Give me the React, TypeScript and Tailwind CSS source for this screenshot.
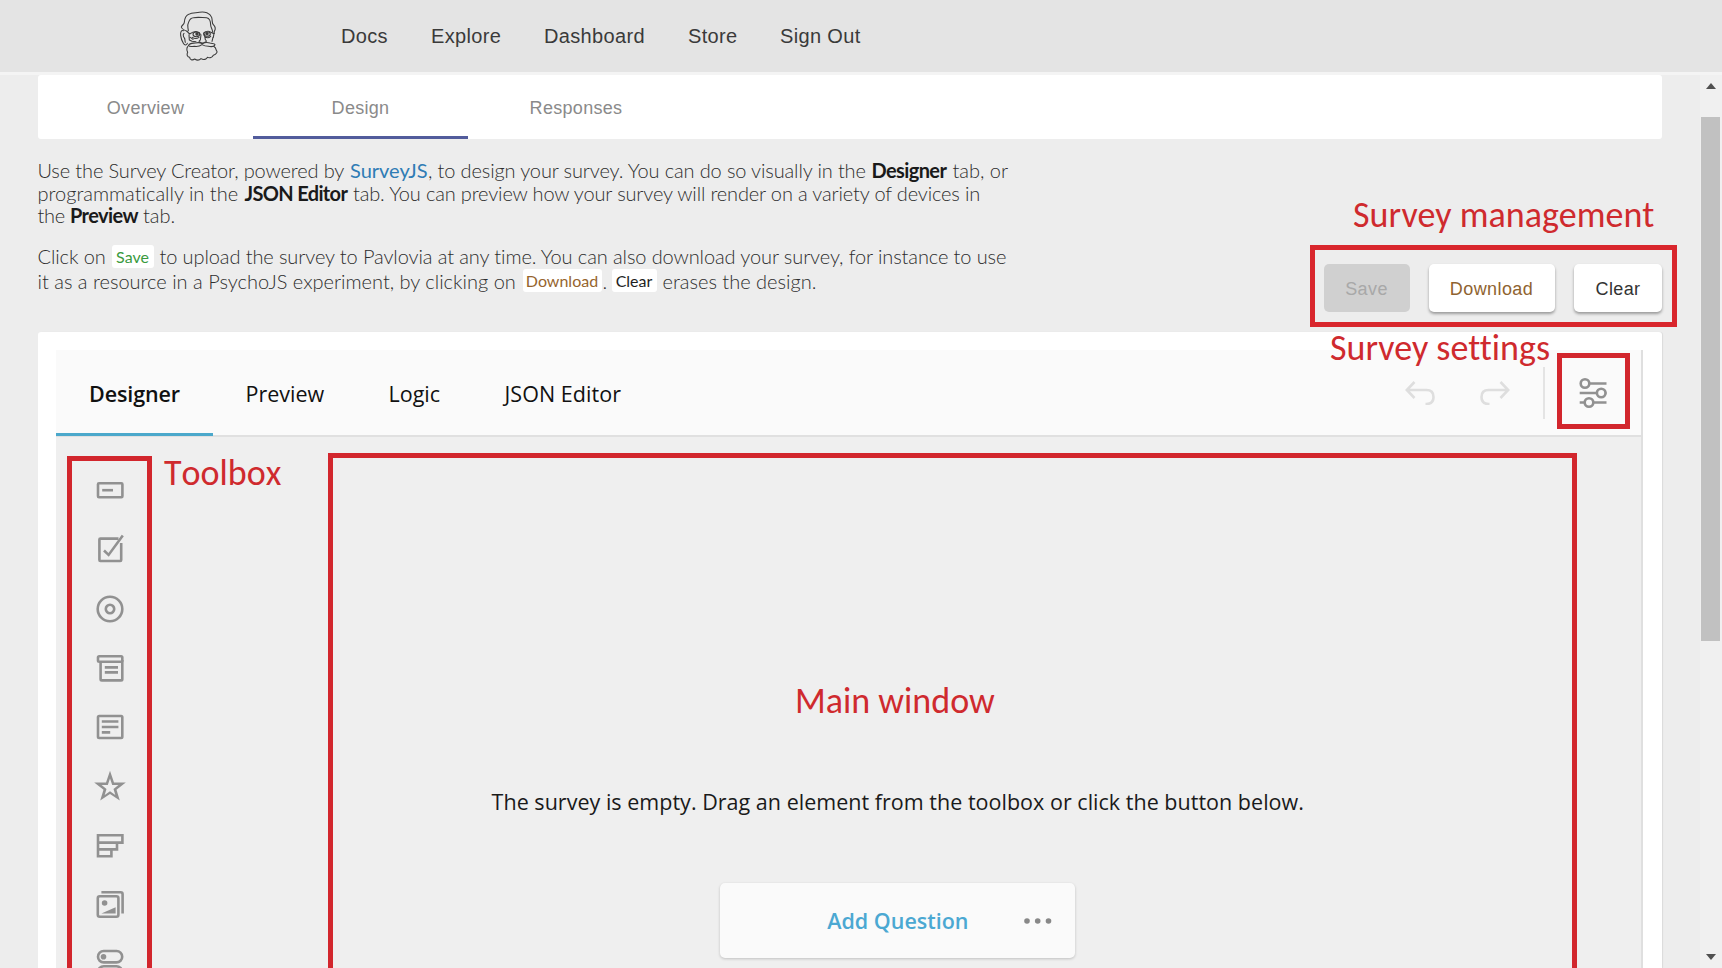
import type { ReactNode } from "react";

const navLinks = [
  { label: "Docs", cls: "w-[90px]" },
  { label: "Explore", cls: "w-[113px]" },
  { label: "Dashboard", cls: "w-[144px]" },
  { label: "Store", cls: "w-[92px]" },
  { label: "Sign Out", cls: "w-[90px]" },
];

function Logo() {
  return (
    <svg className="h-[52px] w-[42px]" viewBox="55 30 126 156" fill="none" stroke="#3c3c3c" strokeWidth="3.2" strokeLinejoin="round" strokeLinecap="round">
      <path d="M82 94c-7-3-16-8-17-13 1-5 9-8 9-14 1-12 3-20 13-24 10-6 22-4 32-6 16-3 32 2 37 15 3 10 0 18 5 22 7 7 7 14 3 20l-3 18" />
      <path d="M86 92c0-8-5-14 0-23 3-8 4-15 15-16 16-2 27 0 40 0 10 2 12 12 12 22 0 8 6 12 6 22" />
      <path d="M72 92c-8-2-10 5-9 14 1 9 4 17 8 24 4 7 10 6 12 0M73 100c-4 3-2 10 1 14 3 3 1 9 3 13" />
      <path d="M82 94l8 8c8-6 14-10 22-7 6 1 9 3 10 8M132 100c5-6 14-8 20-4 6 3 8 6 12 4" />
      <ellipse cx="110" cy="103" rx="10" ry="7" />
      <ellipse cx="142" cy="102" rx="10" ry="7" />
      <circle cx="112" cy="102" r="3.5" fill="#3c3c3c" />
      <circle cx="142" cy="101" r="3.5" fill="#3c3c3c" />
      <path d="M124 104l-2 16c-5 3-5 8 1 7 4 3 8 3 12 0 5 0 7-4 2-8l-3-16M88 104l1 16 8 4 12 1M160 112l-3 12M98 112c6 4 14 4 20 0M136 111c6 3 12 3 17-2M92 112l8 6" />
      <path d="M86 137c4-9 14-7 21-8 8-2 14-2 20 2 8-4 18-4 24-2 7 2 14 1 15 5-2 7-14 6-20 5-8 0-14-2-19-5-8 6-16 6-23 5-8 0-14 2-18-2Z" />
      <path d="M84 140c-5 7-2 12 0 17-4 8 0 14 6 15 0 7 8 10 15 5 6 4 14 4 19-1 8 5 17 2 19-4 7 3 15 0 18-6 9-3 14-10 9-15-1-6-4-10-8-12" />
    </svg>
  );
}

function Bold({ children, cls }: { children: ReactNode; cls: string }) {
  return <b className={"font-bold text-[#1a1a1a] " + cls}>{children}</b>;
}

function Chip({ children, cls }: { children: ReactNode; cls: string }) {
  return (
    <span className={"flex h-[23px] items-center justify-center rounded-[3px] bg-white text-[16px] font-normal " + cls}>
      {children}
    </span>
  );
}

function Icon({ children }: { children: ReactNode }) {
  return (
    <svg className="size-8 overflow-visible" viewBox="-16 -16 32 32" fill="none" stroke="#919191" strokeWidth="2.6">
      {children}
    </svg>
  );
}

const tools: ReactNode[] = [
  <>
    <rect x="-12" y="-6.7" width="24.4" height="14" rx="1" />
    <path d="M-7.8 .2H3" />
  </>,
  <>
    <path d="M8.5-10.4H-9.6q-1 0-1 1V11q0 1 1 1H10.2q1 0 1-1V-6" />
    <path d="M-6 1.5l4.6 4.4L12.8-13.6" />
  </>,
  <>
    <circle r="12.3" />
    <circle r="4.2" />
  </>,
  <>
    <rect x="-12" y="-11.7" width="24.3" height="5.4" rx="1.2" />
    <path d="M-9.4-6.3V11.2q0 1.2 1.2 1.2H11.1q1.2 0 1.2-1.2V-8M-5.2-.6H8M-5.2 4.4H8" />
  </>,
  <>
    <rect x="-12" y="-11" width="24.3" height="22" rx="1.2" />
    <path d="M-8.2-5.5H8.4M-8.2 0H8.4M-8.2 5.4H.2" />
  </>,
  <path
    d="M0-16.3L4-4.6 15.8-4.4 6.5 2.8 9.8 13.6 0 7 -9.8 13.6 -6.5 2.8 -15.8-4.4 -4-4.6ZM0-8.6L-2.2-2.1 -8.4-2 -3.5 1.9 -5.3 8 0 4.3 5.3 8 3.5 1.9 8.4-2 2.2-2.1Z"
    fill="#919191"
    fillRule="evenodd"
    stroke="none"
  />,
  <path d="M-12-10.7H12.4V-3.4H-12ZM-12-3.4V10.3H1.4V3.4M-12 3.4H7V-3.4" />,
  <>
    <rect x="-12.2" y="-8.8" width="20.6" height="20.6" rx="2" />
    <path d="M-8.6-12.8H10.6q2 0 2 2V8.4" />
    <circle cx="-5.4" cy="-2" r="2.8" fill="#919191" stroke="none" />
    <path d="M-8.6 8.6L5.6 2.2V8.6Z" fill="#919191" stroke="none" />
  </>,
  <>
    <rect x="-12" y="-14" width="24.2" height="11.4" rx="5.7" />
    <circle cx="-6.5" cy="-8.3" r="2.8" fill="#919191" stroke="none" />
    <rect x="-12" y="1.3" width="24.2" height="11.4" rx="5.7" />
  </>,
];

function Note({ children, cls }: { children: ReactNode; cls: string }) {
  return (
    <span className={"absolute whitespace-nowrap font-['Carlito','Calibri','Lato',sans-serif] text-[36px] leading-[44px] text-[#cf2a2e] [font-variant-ligatures:none] " + cls}>
      {children}
    </span>
  );
}

export default function App() {
  return (
    <div className="relative flex h-[968px] w-[1722px] flex-col overflow-hidden bg-[#ededed] font-['Liberation_Sans',Arial,sans-serif]">
      <header className="flex h-[75px] shrink-0 items-center border-b-[3px] border-[#f4f4f4] bg-[#e4e4e4]">
        <div className="w-[341px] shrink-0 pl-[178px]">
          <Logo />
        </div>
        <nav className="flex text-[20px] tracking-[0.35px] text-[#3a3a3a]">
          {navLinks.map((l) => (
            <a key={l.label} className={"whitespace-nowrap " + l.cls}>{l.label}</a>
          ))}
        </nav>
      </header>

      <div className="flex min-h-0 flex-1">
        <main className="flex w-[1700px] flex-col pl-[37.5px]">
          <div className="flex h-16 w-[1624px] shrink-0 rounded-[3px] bg-white text-[18px] text-[#8a8a8a]">
            <div className="flex w-[215px] items-center justify-center border-b-[3px] border-transparent pt-[5px] pl-px tracking-[0.3px]">Overview</div>
            <div className="flex w-[215px] items-center justify-center border-b-[3px] border-[#525c9c] pt-[5px] pl-px tracking-[0.3px]">Design</div>
            <div className="flex w-[215px] items-center justify-center border-b-[3px] border-transparent pt-[5px] pl-0.5 tracking-[0.3px]">Responses</div>
          </div>

          <div className="flex h-[193px] w-[1624px] shrink-0 justify-between">
            <div className="flex flex-col whitespace-pre pt-[20.2px] font-['Lato',sans-serif] text-[20px] font-light text-[#2e2e2e] [font-variant-ligatures:none]">
              <div className="flex h-[22.6px] leading-[22.4px]">
                <span className="w-[312.5px] tracking-[-0.14px]">Use the Survey Creator, powered by</span>
                <span className="w-[78px] font-normal text-[#2f7cb5]">SurveyJS</span>
                <span className="w-[443.5px] tracking-[-0.13px]">, to design your survey. You can do so visually in the</span>
                <Bold cls="w-[75px] tracking-[-0.6px]">Designer</Bold>
                <span className="pl-[6px]">tab, or</span>
              </div>
              <div className="flex h-[22.4px] leading-[22.4px]">
                <span className="w-[207px]">programmatically in the</span>
                <Bold cls="w-[108.5px] tracking-[-0.65px]">JSON Editor</Bold>
                <span className="tracking-[-0.15px]">tab. You can preview how your survey will render on a variety of devices in</span>
              </div>
              <div className="flex h-[22.4px] leading-[22.4px]">
                <span className="w-[32.5px] tracking-[-0.3px]">the</span>
                <Bold cls="w-[73px] tracking-[-0.6px]">Preview</Bold>
                <span>tab.</span>
              </div>
              <div className="mt-[17.8px] flex h-[24.5px] leading-6">
                <span className="w-[74px] tracking-[-0.1px]">Click on</span>
                <Chip cls="mt-px mr-[6px] w-[42px] text-[#3a9a3e]">Save</Chip>
                <span className="tracking-[-0.1px]">to upload the survey to Pavlovia at any time. You can also download your survey, for instance to use</span>
              </div>
              <div className="flex h-6 leading-6">
                <span className="w-[485px]">it as a resource in a PsychoJS experiment, by clicking on</span>
                <Chip cls="mt-[0.5px] w-[79px] text-[#96642e]">Download</Chip>
                <span className="w-[10px] pl-px">.</span>
                <Chip cls="mt-[0.5px] mr-[6px] w-[45px] text-[#1e1e1e]">Clear</Chip>
                <span>erases the design.</span>
              </div>
            </div>
            <div className="flex gap-[19px] pt-[125px] text-[18px] tracking-[0.4px]">
              <button className="h-12 w-[86px] rounded-[5px] bg-[#d0d0d0] pt-0.5 text-[#a8a8a8]">Save</button>
              <button className="h-12 w-[126px] rounded-[5px] bg-white pt-0.5 text-[#8f6330] shadow-[0_2px_3px_rgba(0,0,0,0.35)]">Download</button>
              <button className="h-12 w-[88px] rounded-[5px] bg-white pt-0.5 pl-px text-[#333] shadow-[0_2px_3px_rgba(0,0,0,0.35)]">Clear</button>
            </div>
          </div>

          <section className="flex w-[1624px] flex-1 flex-col rounded-t-[3px] bg-white pt-[18px] pr-[19px] pl-[18.5px] font-['Open_Sans',sans-serif] shadow-[1px_0_1px_rgba(0,0,0,0.08)]">
            <div className="flex flex-1 flex-col border-r-2 border-[#dfdfdf] bg-[#efefef]">
              <div className="flex h-[86.5px] shrink-0 border-b-2 border-[#e0e0e0] bg-[#fafafa] text-[21.5px] whitespace-nowrap text-[#111]">
                <div className="flex h-[86px] w-[157px] items-center border-b-[3px] border-[#4ba8cb] pt-[5px] pl-[33px] font-semibold tracking-[-0.1px]">Designer</div>
                <div className="flex w-[143px] items-center pt-[3px] pl-[32.5px]">Preview</div>
                <div className="flex w-[114px] items-center pt-[3px] pl-[32.5px]">Logic</div>
                <div className="flex w-[160px] items-center pt-[3px] pl-[34.5px] tracking-[0.05px]">JSON Editor</div>
                <div className="ml-auto flex items-center pt-[2px] pr-[31.5px]">
                  <svg className="h-6 w-[30px]" viewBox="0 0 30 24" fill="none" stroke="#dedede" strokeWidth="2.6">
                    <path d="M9.5 1L1.8 9l7.7 8M2 9h19.5q7 0 7 7t-7 7h-1" />
                  </svg>
                  <svg className="ml-[45px] h-6 w-[30px] -scale-x-100" viewBox="0 0 30 24" fill="none" stroke="#dedede" strokeWidth="2.6">
                    <path d="M9.5 1L1.8 9l7.7 8M2 9h19.5q7 0 7 7t-7 7h-1" />
                  </svg>
                  <div className="ml-[33px] h-[52px] w-[2px] bg-[#e4e4e4]" />
                  <div className="ml-[32.5px]">
                    <Icon>
                      <circle cx="-8" cy="-9.5" r="4.3" />
                      <circle cx="8.2" cy="0" r="4.3" />
                      <circle cx="-4" cy="9.5" r="4.3" />
                      <path d="M-3.7-9.5H13.5M-13.3 0H4M12.5 0h1M-13.3 9.5H-8.3M.3 9.5H13.5" />
                    </Icon>
                  </div>
                </div>
              </div>
              <div className="flex min-h-0 flex-1">
                <div className="flex h-[531px] w-[108.5px] flex-col overflow-hidden pt-[24px]">
                  {tools.map((t, i) => (
                    <div key={i} className="flex h-[59.3px] shrink-0 items-center justify-center">
                      <Icon>{t}</Icon>
                    </div>
                  ))}
                </div>
                <div className="flex flex-1 flex-col items-center pt-[350.5px] pr-[41px] pl-[31.5px] text-[21.5px] text-[#1a1a1a]">
                  <p className="h-[30px] whitespace-nowrap leading-[30px] tracking-[0.02px]">The survey is empty. Drag an element from the toolbox or click the button below.</p>
                  <div className="mt-[66px] flex h-[75px] w-[355px] shrink-0 items-center rounded-[5px] bg-[#fafafa] shadow-[0_1px_3px_rgba(0,0,0,0.2)]">
                    <span className="w-[303px] pt-px pl-[107px] font-semibold whitespace-nowrap text-[#4ba8d2]">Add Question</span>
                    <svg className="h-2 w-8" viewBox="0 0 32 8" fill="#888">
                      <circle cx="4" cy="4" r="2.8" />
                      <circle cx="14.7" cy="4" r="2.8" />
                      <circle cx="25.5" cy="4" r="2.8" />
                    </svg>
                  </div>
                </div>
              </div>
            </div>
          </section>
        </main>

        <aside className="flex w-[22px] flex-col items-center bg-[#f0f0f0] pr-px">
          <svg className="mt-[7.5px] h-[6px] w-[10px]" viewBox="0 0 10 6"><path d="M5 0l5 6H0z" fill="#505050" /></svg>
          <div className="mt-[28px] h-[524px] w-[19px] bg-[#c1c1c1]" />
          <svg className="mt-[313px] h-[6px] w-[10px]" viewBox="0 0 10 6"><path d="M0 0h10L5 6z" fill="#505050" /></svg>
        </aside>
      </div>

      <Note cls="top-[193px] left-[1353px] tracking-[0.05px]">Survey management</Note>
      <Note cls="top-[326px] left-[1330px]">Survey settings</Note>
      <Note cls="top-[451px] left-[164px] [font-kerning:none]">Toolbox</Note>
      <Note cls="top-[679px] left-[795px]">Main window</Note>
      <div className="absolute top-[245px] left-[1310px] h-[82px] w-[367px] border-[5px] border-[#d9262d]" />
      <div className="absolute top-[353px] left-[1557px] h-[76px] w-[73px] border-[5px] border-[#d2262d]" />
      <div className="absolute top-[456px] left-[67px] h-[530px] w-[85px] border-[5px] border-[#d2262d]" />
      <div className="absolute top-[453px] left-[328px] h-[530px] w-[1249px] border-[5px] border-[#d2262d]" />
    </div>
  );
}
